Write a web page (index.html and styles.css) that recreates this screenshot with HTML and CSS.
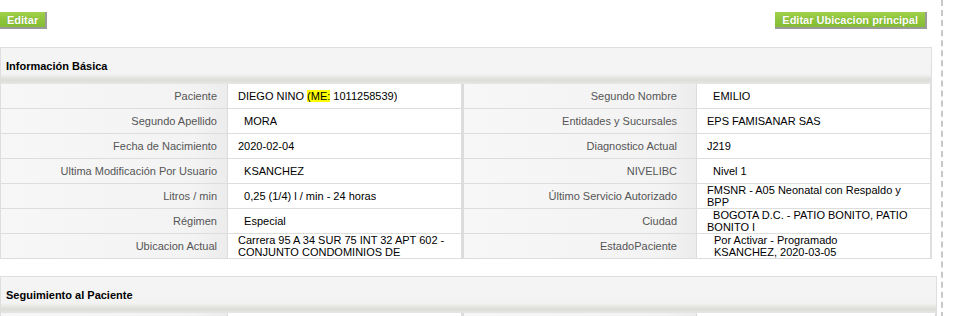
FILE: index.html
```html
<!DOCTYPE html>
<html lang="es">
<head>
<meta charset="utf-8">
<title>Paciente</title>
<link rel="stylesheet" href="styles.css">
</head>
<body>
<div class="page">
  <div class="main">
    <div class="toolbar">
      <button class="btn" type="button">Editar</button>
      <button class="btn" type="button">Editar Ubicacion principal</button>
    </div>

    <section class="panel">
      <div class="panel-head">Información Básica</div>
      <div class="grid">
        <div class="lbl">Paciente</div>
        <div class="val"><div class="txt">DIEGO NINO <span class="hl">(ME:</span> 1011258539)</div></div>
        <div class="lbl lbl-r">Segundo Nombre</div>
        <div class="val val-r"><div class="txt">&nbsp;&nbsp;EMILIO</div></div>

        <div class="lbl">Segundo Apellido</div>
        <div class="val"><div class="txt">&nbsp;&nbsp;MORA</div></div>
        <div class="lbl lbl-r">Entidades y Sucursales</div>
        <div class="val val-r"><div class="txt">EPS FAMISANAR SAS</div></div>

        <div class="lbl">Fecha de Nacimiento</div>
        <div class="val"><div class="txt">2020-02-04</div></div>
        <div class="lbl lbl-r">Diagnostico Actual</div>
        <div class="val val-r"><div class="txt">J219</div></div>

        <div class="lbl">Ultima Modificación Por Usuario</div>
        <div class="val"><div class="txt">&nbsp;&nbsp;KSANCHEZ</div></div>
        <div class="lbl lbl-r">NIVELIBC</div>
        <div class="val val-r"><div class="txt">&nbsp;&nbsp;Nivel 1</div></div>

        <div class="lbl">Litros / min</div>
        <div class="val"><div class="txt">&nbsp;&nbsp;0,25 (1/4) l / min - 24 horas</div></div>
        <div class="lbl lbl-r">Último Servicio Autorizado</div>
        <div class="val val-r"><div class="txt">FMSNR - A05 Neonatal con Respaldo y BPP</div></div>

        <div class="lbl">Régimen</div>
        <div class="val"><div class="txt">&nbsp;&nbsp;Especial</div></div>
        <div class="lbl lbl-r">Ciudad</div>
        <div class="val val-r"><div class="txt">&nbsp;&nbsp;BOGOTA D.C. - PATIO BONITO, PATIO BONITO I</div></div>

        <div class="lbl">Ubicacion Actual</div>
        <div class="val"><div class="txt">Carrera 95 A 34 SUR 75 INT 32 APT 602 - CONJUNTO CONDOMINIOS DE</div></div>
        <div class="lbl lbl-r">EstadoPaciente</div>
        <div class="val val-r"><div class="txt indent">Por Activar - Programado<br>KSANCHEZ, 2020-03-05</div></div>
      </div>
    </section>

    <section class="panel panel-wide">
      <div class="panel-head">Seguimiento al Paciente</div>
      <div class="grid">
        <div class="lbl">&nbsp;</div>
        <div class="val"><div class="txt">&nbsp;</div></div>
        <div class="lbl lbl-r">&nbsp;</div>
        <div class="val val-r"><div class="txt">&nbsp;</div></div>
      </div>
    </section>
  </div>
</div>
</body>
</html>
```

FILE: styles.css
```css
html, body {
  margin: 0;
  padding: 0;
  background: #ffffff;
}

body {
  font-family: "Liberation Sans", Arial, sans-serif;
  font-size: 11px;
  color: #000;
  overflow: hidden;
}

.page {
  display: flex;
  align-items: stretch;
  min-height: 316px;
}

.main {
  width: 943px;
  border-right: 2px dashed #c8c8c8;
  box-sizing: border-box;
}

.toolbar {
  display: flex;
  justify-content: space-between;
  align-items: flex-start;
  padding-top: 12px;
  width: 927px;
}

.btn {
  font-family: "Liberation Sans", Arial, sans-serif;
  font-size: 11px;
  font-weight: bold;
  color: #ffffff;
  height: 17px;
  line-height: 14px;
  padding: 0 7px 0 7px;
  margin: 0;
  border: 0;
  border-right: 2px solid #9a9a9a;
  border-bottom: 2px solid #9a9a9a;
  background: linear-gradient(to bottom, #a2d04c 0%, #8fc53c 50%, #84bd33 100%);
  text-shadow: 0 0 1px #6f9d2a;
  cursor: pointer;
}

.panel {
  margin-top: 18px;
  width: 932px;
  border: 1px solid #dedede;
  border-bottom: 0;
  box-sizing: border-box;
}

.panel + .panel {
  margin-top: 17px;
}

.panel-wide {
  width: 937px;
}

.panel-head {
  height: 36px;
  display: flex;
  align-items: center;
  padding-left: 5px;
  font-weight: bold;
  color: #000;
  background: linear-gradient(to bottom, #f5f5f5 0px, #f3f3f3 26px, #dcdcd8 32px, #e6e6e4 36px);
}

.grid {
  display: grid;
  grid-template-columns: 227px 234px 235px 1fr;
}

.lbl {
  height: 24px;
  border-bottom: 1px solid #dddddd;
  border-right: 1px solid #dcdcdc;
  display: flex;
  align-items: center;
  justify-content: flex-end;
  padding-right: 10px;
  color: #555;
  white-space: nowrap;
  background: linear-gradient(to right, #f7f7f7 0%, #f3f3f3 85%, #ececec 100%);
}

.lbl-r {
  border-left: 2px solid #dcdcdc;
  padding-right: 19px;
}

.val {
  height: 24px;
  border-bottom: 1px solid #dddddd;
  border-right: 1px solid #dddddd;
  display: flex;
  align-items: center;
  padding-left: 10px;
  padding-right: 14px;
  overflow: hidden;
  background: #fff;
}

.val-r {
  padding-left: 10px;
  padding-right: 20px;
}

.txt {
  line-height: 12px;
  max-height: 24px;
  overflow: hidden;
}

.indent {
  padding-left: 7px;
}

.hl {
  background: #ffff00;
}
```
